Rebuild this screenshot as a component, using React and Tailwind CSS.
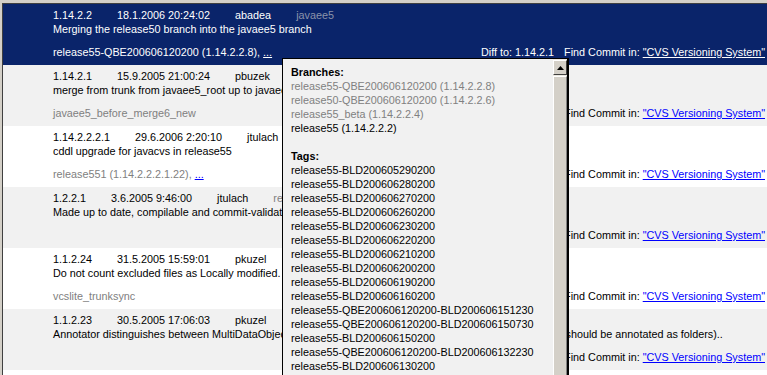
import React from "react";

const ROWS = [
  {
    v: "1.14.2.2",
    date: "18.1.2006 20:24:02",
    author: "abadea",
    branch: "javaee5",
    msg: "Merging the release50 branch into the javaee5 branch",
    tags: "release55-QBE200606120200 (1.14.2.2.8), ",
    more: true,
    diff: "1.14.2.1",
    selected: true,
  },
  {
    v: "1.14.2.1",
    date: "15.9.2005 21:00:24",
    author: "pbuzek",
    branch: "javaee5",
    msg: "merge from trunk from javaee5_root up to javaee5_before_merge6_new",
    tags: "javaee5_before_merge6_new",
  },
  {
    v: "1.14.2.2.2.1",
    date: "29.6.2006 2:20:10",
    author: "jtulach",
    branch: "release55",
    msg: "cddl upgrade for javacvs in release55",
    tags: "release551 (1.14.2.2.2.1.22), ",
    more: true,
  },
  {
    v: "1.2.2.1",
    date: "3.6.2005 9:46:00",
    author: "jtulach",
    branch: "release40",
    msg: "Made up to date, compilable and commit-validation tests",
    tags: "",
  },
  {
    v: "1.1.2.24",
    date: "31.5.2005 15:59:01",
    author: "pkuzel",
    branch: "vcslite",
    msg: "Do not count excluded files as Locally modified.",
    tags: "vcslite_trunksync",
  },
  {
    v: "1.1.2.23",
    date: "30.5.2005 17:06:03",
    author: "pkuzel",
    branch: "vcslite",
    msg: "Annotator distinguishes between MultiDataObjects and DataShadows (shadows of all real folders and links should be annotated as folders)..",
    tags: "",
  },
  { v: "", date: "", author: "", branch: "", msg: "", tags: "", blank: true },
];

const BRANCHES = [
  ["release55-QBE200606120200 (1.14.2.2.8)", true],
  ["release50-QBE200606120200 (1.14.2.2.6)", true],
  ["release55_beta (1.14.2.2.4)", true],
  ["release55 (1.14.2.2.2)", false],
];

const TAGS = [
  "release55-BLD200605290200",
  "release55-BLD200606280200",
  "release55-BLD200606270200",
  "release55-BLD200606260200",
  "release55-BLD200606230200",
  "release55-BLD200606220200",
  "release55-BLD200606210200",
  "release55-BLD200606200200",
  "release55-BLD200606190200",
  "release55-BLD200606160200",
  "release55-QBE200606120200-BLD200606151230",
  "release55-QBE200606120200-BLD200606150730",
  "release55-BLD200606150200",
  "release55-QBE200606120200-BLD200606132230",
  "release55-BLD200606130200",
];

function Row({ r, i }) {
  const bg = r.selected ? "bg-[#0a246a] text-white" : i % 2 ? "bg-[#f1f1f1] text-black" : "bg-white text-black";
  const dim = r.selected ? "text-[#8b93ab]" : "text-[#808080]";
  const link = r.selected ? "text-white" : "text-[#0000ff]";
  if (r.blank) return <div className={`${bg} h-[61px] shrink-0`} />;
  return (
    <div className={`${bg} h-[61px] shrink-0 pt-[4px] pl-[50px] pr-[2px] flex flex-col whitespace-nowrap`}>
      <div className="h-[14px] leading-[14px] flex gap-[25px]">
        <span>{r.v}</span>
        <span>{r.date}</span>
        <span>{r.author}</span>
        <span className={dim}>{r.branch}</span>
      </div>
      <div className="h-[14px] leading-[14px]">{r.msg}</div>
      <div className="h-[14px] leading-[14px] mt-[9px] flex justify-between">
        <span className={r.selected ? "" : dim}>
          {r.tags}
          {r.more && <span className={`${link} underline`}>...</span>}
        </span>
        <span className="flex">
          {r.diff && <span className="mr-[10px]">Diff to: {r.diff}</span>}
          <span>
            Find Commit in: <span className={`${link} underline`}>"CVS Versioning System"</span>
          </span>
        </span>
      </div>
    </div>
  );
}

export default function App() {
  return (
    <div
      className="w-[767px] h-[375px] overflow-hidden bg-[#d4d0c8] pt-[3px] pl-[2px] relative text-[10.8px]"
      style={{ fontFamily: '"Liberation Sans", Arial, sans-serif' }}
    >
      <div className="h-full border-t border-l border-[#404040] flex flex-col overflow-hidden">
        {ROWS.map((r, i) => (
          <Row key={i} r={r} i={i} />
        ))}
      </div>

      <div className="absolute left-[282px] top-[58px] w-[287px] h-[330px] bg-[#f1f1f1] border border-black border-r-2 flex">
        <div className="flex-1 pl-[8px] pt-[6px] leading-[14px] whitespace-nowrap overflow-hidden">
          <div className="font-bold">Branches:</div>
          {BRANCHES.map(([b, grey]) => (
            <div key={b} className={grey ? "text-[#808080]" : "text-black"}>
              {b}
            </div>
          ))}
          <div className="h-[14px]" />
          <div className="font-bold">Tags:</div>
          {TAGS.map((t) => (
            <div key={t}>{t}</div>
          ))}
        </div>
        <div className="w-[14px] flex flex-col pt-[1px] bg-[#ece9e1]">
          <div className="h-[15px] bg-[#d4d0c8] border border-t-white border-l-white border-b-[#404040] border-r-[#404040] flex items-center justify-center">
            <svg width="7" height="4" viewBox="0 0 7 4">
              <polygon points="3.5,0 7,4 0,4" fill="#000" />
            </svg>
          </div>
          <div className="flex-1 mt-[1px] bg-[#d4d0c8] border border-t-white border-l-white border-b-[#808080] border-r-[#808080]" />
        </div>
      </div>
    </div>
  );
}
